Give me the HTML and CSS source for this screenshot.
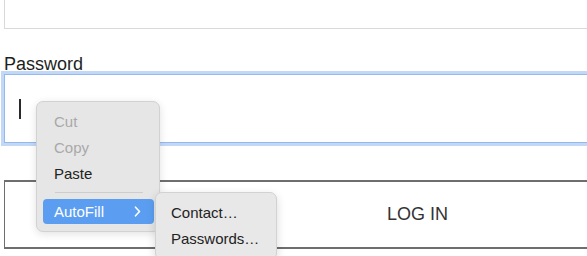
FILE: index.html
```html
<!DOCTYPE html>
<html>
<head>
<meta charset="utf-8">
<link rel="stylesheet" href="styles.css">
</head>
<body>
<div class="page">
  <div class="form">
    <div class="field field-top"></div>
    <label class="label">Password</label>
    <div class="field field-focus"><span class="caret"></span></div>
    <div class="button">LOG IN</div>
  </div>

  <div class="menu main-menu">
    <div class="item disabled">Cut</div>
    <div class="item disabled">Copy</div>
    <div class="item">Paste</div>
    <div class="sep"></div>
    <div class="item active">AutoFill
      <svg class="chev" width="7" height="11" viewBox="0 0 7 11"><path d="M1.5 1.2 L5.5 5.5 L1.5 9.8" fill="none" stroke="#fff" stroke-width="1.6" stroke-linecap="round" stroke-linejoin="round"/></svg>
    </div>
  </div>

  <div class="menu sub-menu">
    <div class="item">Contact…</div>
    <div class="item">Passwords…</div>
  </div>
</div>
</body>
</html>
```

FILE: styles.css
```css
html, body {
  margin: 0;
  padding: 0;
  background: #fff;
}

body {
  font-family: "Liberation Sans", Arial, sans-serif;
}

.page {
  position: relative;
  width: 587px;
  height: 256px;
  overflow: hidden;
}

.form {
  margin-left: 4px;
  width: 828px;
  display: flex;
  flex-direction: column;
}

.field {
  box-sizing: border-box;
  height: 69px;
  background: #fff;
}

.field-top {
  margin-top: -40px;
  border: 1px solid #d9d9d9;
}

.label {
  margin-top: 26px;
  font-size: 18px;
  line-height: 19px;
  color: #1e1e1e;
}

.field-focus {
  border: 1px solid #94b9ee;
  box-shadow: 0 0 0 3px #c3d8f7;
  display: flex;
  align-items: center;
  padding-left: 14px;
}

.caret {
  display: block;
  width: 2px;
  height: 20px;
  background: #2a2a2a;
}

.button {
  box-sizing: border-box;
  margin-top: 37px;
  height: 69px;
  border: 2px solid #6e6e6e;
  border-left-width: 1.5px;
  display: flex;
  align-items: center;
  justify-content: center;
  font-size: 18px;
  color: #333;
}

.menu {
  position: absolute;
  box-sizing: border-box;
  background: #e6e6e6;
  border: 1px solid #d2d2d2;
  border-radius: 7px;
  box-shadow: 0 2px 8px rgba(0, 0, 0, 0.12);
  padding: 7px 5px 7px 6px;
  font-size: 15px;
  color: #222;
}

.main-menu {
  left: 36px;
  top: 101px;
  width: 124px;
  height: 131px;
}

.sub-menu {
  left: 155px;
  top: 192px;
  width: 122px;
  background: #e8e8e8;
  box-shadow: 0 3px 10px rgba(0, 0, 0, 0.15);
}

.item {
  height: 26px;
  line-height: 26px;
  padding-left: 11px;
  padding-right: 13px;
  border-radius: 4px;
  display: flex;
  align-items: center;
  justify-content: space-between;
}

.sub-menu .item {
  padding-left: 9px;
}

.disabled {
  color: #a9a9a9;
}

.sep {
  height: 1px;
  background: #cdcdcd;
  margin: 5px 11px 6px 12px;
}

.active {
  height: 25px;
  line-height: 25px;
  background: #5b9ef1;
  color: #fff;
}

.chev {
  display: block;
}
```
